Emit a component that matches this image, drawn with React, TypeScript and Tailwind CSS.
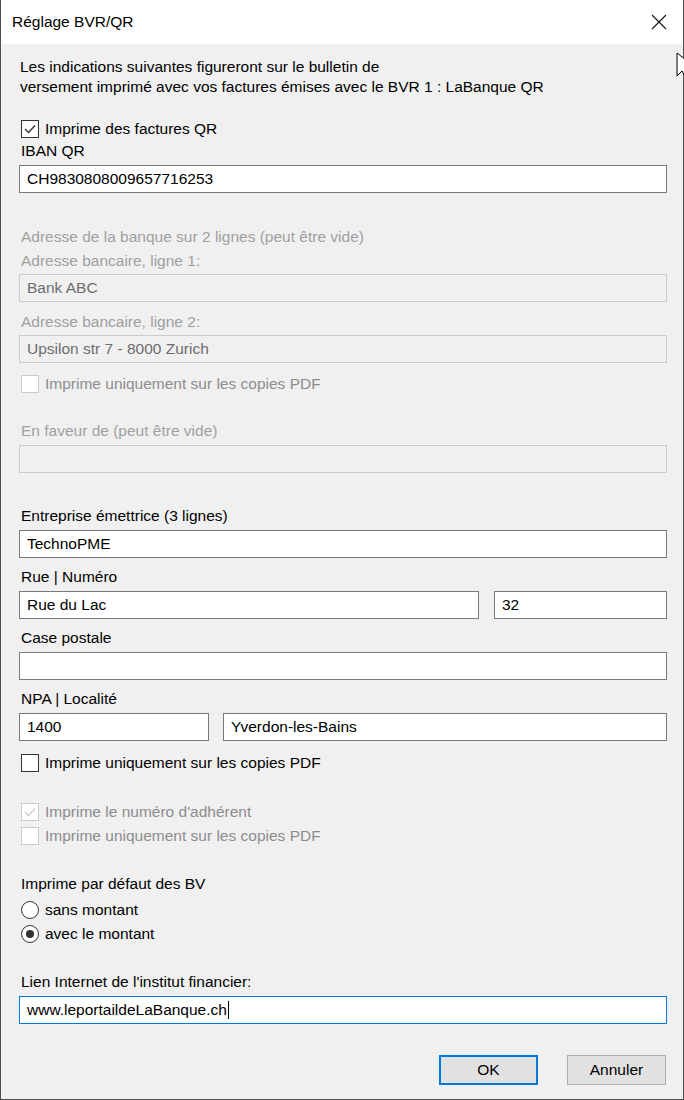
import React from "react";

const font = { fontFamily: '"Liberation Sans", Arial, sans-serif' };

function Label({ text, disabled, className = "" }: { text: string; disabled?: boolean; className?: string }) {
  return (
    <div className={`h-5 leading-5 ${disabled ? "text-[#a0a0a0]" : "text-black"} ${className}`}>
      {text}
    </div>
  );
}

function Field({
  value = "",
  disabled,
  focused,
  caret,
  className = "",
}: {
  value?: string;
  disabled?: boolean;
  focused?: boolean;
  caret?: boolean;
  className?: string;
}) {
  const border = focused ? "border-[#0078d7]" : disabled ? "border-[#cccccc]" : "border-[#7a7a7a]";
  const bg = disabled ? "bg-[#f0f0f0] text-[#6d6d6d]" : "bg-white text-black";
  return (
    <div className={`h-[28px] border ${border} ${bg} flex items-center pl-[7px] ${className}`}>
      <span>{value}</span>
      {caret && <span className="inline-block w-px h-[18px] bg-black ml-px" />}
    </div>
  );
}

function Check({
  text,
  checked,
  disabled,
  className = "",
}: {
  text: string;
  checked?: boolean;
  disabled?: boolean;
  className?: string;
}) {
  return (
    <div className={`h-5 flex items-center ${className}`}>
      <div
        className={`ml-[2px] w-[18px] h-[18px] border ${
          disabled ? "border-[#cccccc]" : "border-[#333333]"
        } bg-white flex items-center justify-center`}
      >
        {checked && (
          <svg width="12" height="10" viewBox="0 0 12 10">
            <path d="M1 5 L4.5 8.5 L11 1.5" fill="none" stroke={disabled ? "#cccccc" : "#333333"} strokeWidth="1.4" />
          </svg>
        )}
      </div>
      <span className={`ml-[6px] leading-5 ${disabled ? "text-[#8d8d8d]" : "text-black"}`}>{text}</span>
    </div>
  );
}

function Radio({ text, checked, className = "" }: { text: string; checked?: boolean; className?: string }) {
  return (
    <div className={`h-5 flex items-center ${className}`}>
      <div className="ml-[2px] w-[18px] h-[18px] rounded-full border border-[#333333] bg-white flex items-center justify-center">
        {checked && <div className="w-[8px] h-[8px] rounded-full bg-[#333333]" />}
      </div>
      <span className="ml-[6px] leading-5 text-black">{text}</span>
    </div>
  );
}

export default function App() {
  return (
    <div className="relative w-[684px] h-[1100px] bg-[#f0f0f0] border-x border-b border-[#4f4f4f] text-[15.5px] flex flex-col" style={font}>
      {/* title bar */}
      <div className="h-[44px] bg-white flex items-center justify-between pl-[11px] pr-[16px] shrink-0">
        <span className="text-[15.5px] text-black mt-[-1px]">Réglage BVR/QR</span>
        <svg width="16" height="16" viewBox="0 0 16 16">
          <path d="M1 1 L15 15 M15 1 L1 15" stroke="#111" strokeWidth="1.1" />
        </svg>
      </div>

      <div className="flex flex-col pl-[18px] pr-[16px]">
        <div className="mt-[13px] pl-px">
          <Label text="Les indications suivantes figureront sur le bulletin de" />
          <Label text="versement imprimé avec vos factures émises avec le BVR 1 : LaBanque QR" />
        </div>

        <Check text="Imprime des factures QR" checked className="mt-[22px]" />
        <Label text="IBAN QR" className="mt-[2px] pl-[2px]" />
        <Field value="CH9830808009657716253" className="mt-[4px]" />

        <Label text="Adresse de la banque sur 2 lignes (peut être vide)" disabled className="mt-[34px] pl-[2px]" />
        <Label text="Adresse bancaire, ligne 1:" disabled className="mt-[4px] pl-[2px]" />
        <Field value="Bank ABC" disabled className="mt-[3px]" />
        <Label text="Adresse bancaire, ligne 2:" disabled className="mt-[10px] pl-[2px]" />
        <Field value="Upsilon str 7 - 8000 Zurich" disabled className="mt-[3px]" />
        <Check text="Imprime uniquement sur les copies PDF" disabled className="mt-[11px]" />

        <Label text="En faveur de (peut être vide)" disabled className="mt-[27px] pl-[2px]" />
        <Field disabled className="mt-[4px]" />

        <Label text="Entreprise émettrice (3 lignes)" className="mt-[33px] pl-[2px]" />
        <Field value="TechnoPME" className="mt-[4px]" />
        <Label text="Rue | Numéro" className="mt-[9px] pl-[2px]" />
        <div className="mt-[4px] flex gap-[15px]">
          <Field value="Rue du Lac" className="w-[460px]" />
          <Field value="32" className="flex-1" />
        </div>
        <Label text="Case postale" className="mt-[9px] pl-[2px]" />
        <Field className="mt-[4px]" />
        <Label text="NPA | Localité" className="mt-[9px] pl-[2px]" />
        <div className="mt-[4px] flex gap-[14px]">
          <Field value="1400" className="w-[190px]" />
          <Field value="Yverdon-les-Bains" className="flex-1" />
        </div>
        <Check text="Imprime uniquement sur les copies PDF" className="mt-[12px]" />

        <Check text="Imprime le numéro d'adhérent" checked disabled className="mt-[29px]" />
        <Check text="Imprime uniquement sur les copies PDF" disabled className="mt-[4px]" />

        <Label text="Imprime par défaut des BV" className="mt-[28px] pl-[2px]" />
        <Radio text="sans montant" className="mt-[6px]" />
        <Radio text="avec le montant" checked className="mt-[4px]" />

        <Label text="Lien Internet de l'institut financier:" className="mt-[28px] pl-[2px]" />
        <Field value="www.leportaildeLaBanque.ch" focused caret className="mt-[4px]" />

        <div className="mt-[31px] flex justify-end gap-[29px] pr-[1px]">
          <button className="w-[99px] h-[30px] bg-[#e1e1e1] border-2 border-[#0078d7] text-black">OK</button>
          <button className="w-[99px] h-[30px] bg-[#e1e1e1] border border-[#adadad] text-black">Annuler</button>
        </div>
      </div>

      {/* mouse cursor peeking at the right edge */}
      <svg className="absolute left-[675px] top-[52px]" width="10" height="26" viewBox="0 0 10 26">
        <path d="M1 1 L1 24 L6 19 L10 26 L10 8 Z" fill="white" stroke="black" strokeWidth="1" />
      </svg>
    </div>
  );
}
